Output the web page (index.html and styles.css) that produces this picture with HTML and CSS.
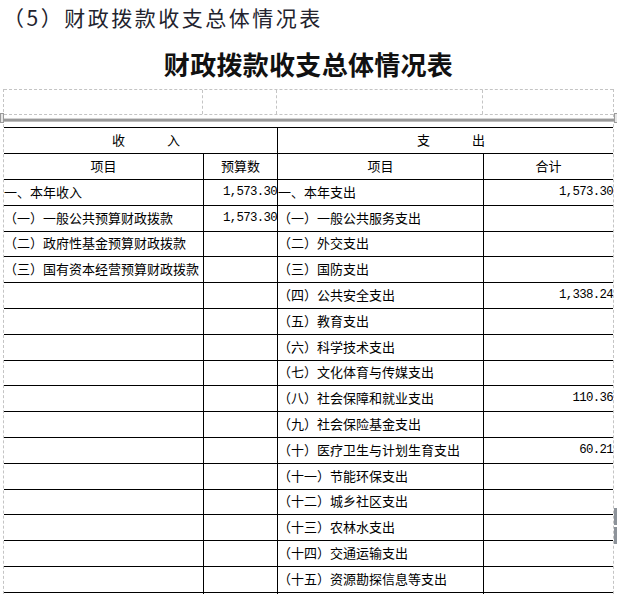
FILE: index.html
```html
<!DOCTYPE html>
<html lang="zh-CN">
<head>
<meta charset="utf-8">
<title>财政拨款收支总体情况表</title>
<link rel="stylesheet" href="styles.css">
</head>
<body>
<div class="page">
  <div class="section-title">（5）财政拨款收支总体情况表</div>
  <h1 class="report-title">财政拨款收支总体情况表</h1>
  <div class="sheet">
    <div class="blank-row">
      <div class="blank-cell"></div>
      <div class="blank-cell"></div>
      <div class="blank-cell"></div>
      <div class="blank-cell last"></div>
    </div>
    <div class="freeze-band">
      <span class="freeze-handle left"></span>
      <span class="freeze-handle right"></span>
    </div>
    <table class="grid">
      <colgroup>
        <col class="c1"><col class="c2"><col class="c3"><col class="c4">
      </colgroup>
      <tbody>
        <tr class="group-head">
          <td colspan="2" class="spaced in"><span>收</span><span>入</span></td>
          <td colspan="2" class="spaced out last"><span>支</span><span>出</span></td>
        </tr>
        <tr class="col-head">
          <td>项目</td><td>预算数</td><td>项目</td><td class="last">合计</td>
        </tr>
        <tr><td>一、本年收入</td><td class="num">1,573.30</td><td>一、本年支出</td><td class="num last">1,573.30</td></tr>
        <tr><td>（一）一般公共预算财政拨款</td><td class="num">1,573.30</td><td>（一）一般公共服务支出</td><td class="num last"></td></tr>
        <tr><td>（二）政府性基金预算财政拨款</td><td class="num"></td><td>（二）外交支出</td><td class="num last"></td></tr>
        <tr><td>（三）国有资本经营预算财政拨款</td><td class="num"></td><td>（三）国防支出</td><td class="num last"></td></tr>
        <tr><td></td><td class="num"></td><td>（四）公共安全支出</td><td class="num last">1,338.24</td></tr>
        <tr><td></td><td class="num"></td><td>（五）教育支出</td><td class="num last"></td></tr>
        <tr><td></td><td class="num"></td><td>（六）科学技术支出</td><td class="num last"></td></tr>
        <tr><td></td><td class="num"></td><td>（七）文化体育与传媒支出</td><td class="num last"></td></tr>
        <tr><td></td><td class="num"></td><td>（八）社会保障和就业支出</td><td class="num last">110.36</td></tr>
        <tr><td></td><td class="num"></td><td>（九）社会保险基金支出</td><td class="num last"></td></tr>
        <tr><td></td><td class="num"></td><td>（十）医疗卫生与计划生育支出</td><td class="num last">60.21</td></tr>
        <tr><td></td><td class="num"></td><td>（十一）节能环保支出</td><td class="num last"></td></tr>
        <tr><td></td><td class="num"></td><td>（十二）城乡社区支出</td><td class="num last"></td></tr>
        <tr><td></td><td class="num"></td><td>（十三）农林水支出</td><td class="num last"></td></tr>
        <tr><td></td><td class="num"></td><td>（十四）交通运输支出</td><td class="num last"></td></tr>
        <tr><td></td><td class="num"></td><td>（十五）资源勘探信息等支出</td><td class="num last"></td></tr>
        <tr><td></td><td class="num"></td><td></td><td class="num last"></td></tr>
      </tbody>
    </table>
  </div>
  <div class="scroll-marks">
    <span class="mark"></span>
    <span class="mark"></span>
  </div>
</div>
</body>
</html>
```

FILE: styles.css
```css
html, body {
  margin: 0;
  padding: 0;
  background: #ffffff;
}

body {
  font-family: "Noto Sans CJK SC", "Noto Sans", sans-serif;
  color: #000;
  overflow: hidden;
}

.page {
  position: relative;
  width: 617px;
  height: 594px;
  overflow: hidden;
}

.section-title {
  height: 34px;
  line-height: 34px;
  font-size: 21px;
  letter-spacing: 2.5px;
  color: #23232e;
  padding-left: 3px;
  white-space: nowrap;
}

.report-title {
  margin: 0;
  padding: 13px 0 8px;
  height: 34px;
  line-height: 34px;
  font-size: 26px;
  font-weight: 700;
  text-align: center;
  color: #111;
  letter-spacing: 0.3px;
}

.sheet {
  margin-left: 3px;
  width: 609px;
  border-left: 1px dashed #c4c4c4;
  border-right: 1px dashed #c4c4c4;
}

.blank-row {
  display: grid;
  grid-template-columns: 199px 74px 206px 130px;
  height: 24px;
  border-top: 1px dashed #c4c4c4;
  border-bottom: 1px dashed #c4c4c4;
}

.blank-cell {
  border-right: 1px dashed #c4c4c4;
}

.blank-cell.last {
  border-right: none;
}

.freeze-band {
  position: relative;
  height: 4px;
  margin: 3px -5px 5px -4px;
  background: linear-gradient(#d4d4d4 0, #d4d4d4 25%, #999 25%, #999 75%, #bdbdbd 75%);
}

.freeze-handle {
  position: absolute;
  top: -5px;
  width: 4px;
  height: 10px;
  border: 1px solid #9a9a9a;
  box-sizing: border-box;
  background: #e6e6e6;
}

.freeze-handle.left {
  left: 0;
}

.freeze-handle.right {
  right: 0;
}

.grid {
  table-layout: fixed;
  width: 609px;
  border-collapse: separate;
  border-spacing: 0;
  border-top: 1px solid #000;
  font-size: 13px;
}

.grid col.c1 { width: 200px; }
.grid col.c2 { width: 74px; }
.grid col.c3 { width: 206px; }
.grid col.c4 { width: 129px; }

.grid tr {
  height: 25.8px;
}

.grid tr.group-head {
  height: 26px;
}

.grid tr.col-head {
  height: 26px;
}

.grid td {
  padding: 0 0 1px;
  border-right: 1px solid #000;
  border-bottom: 1px solid #000;
  white-space: nowrap;
  overflow: hidden;
  vertical-align: middle;
  line-height: 18px;
  text-align: left;
}

.grid td.last {
  border-right: none;
}

.grid td.num {
  text-align: right;
  font-family: "Liberation Mono", "DejaVu Sans Mono", monospace;
  font-size: 12.4px;
  letter-spacing: -0.7px;
}

.col-head td {
  text-align: center;
}

.grid td.spaced {
  text-align: center;
  padding-left: 11px;
}

.spaced span {
  display: inline-block;
}

.spaced span + span {
  margin-left: 42px;
}

.scroll-marks {
  position: absolute;
  right: 0;
  top: 508px;
  width: 3px;
  display: flex;
  flex-direction: column;
  gap: 2px;
}

.mark {
  display: block;
  width: 3px;
  height: 17px;
  background: #8d939a;
}
```
